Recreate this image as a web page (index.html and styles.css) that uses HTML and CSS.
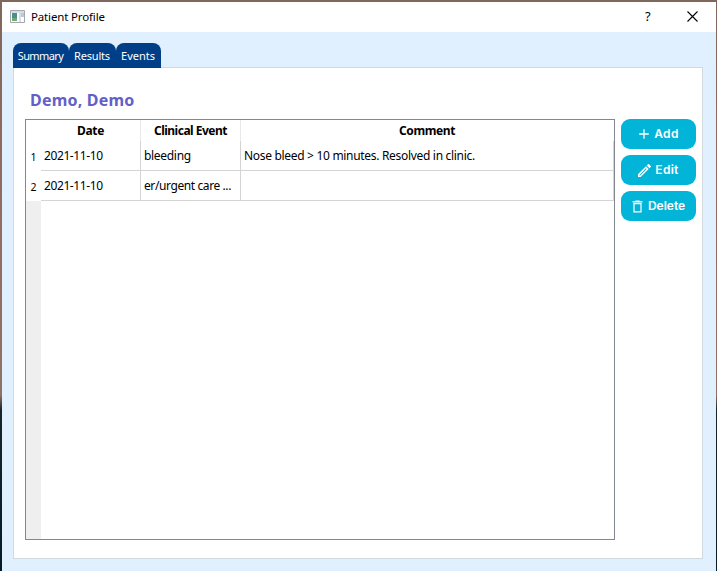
FILE: index.html
```
<!DOCTYPE html>
<html lang="en">
<head>
<meta charset="utf-8">
<title>Patient Profile</title>
<link rel="stylesheet" href="styles.css">
</head>
<body>
<div class="window">
  <header class="titlebar">
    <svg class="app-icon" width="15" height="13" viewBox="0 0 15 13"><path fill="#fff" stroke="#a3a7ae" d="M.5.5h14v12H.5z"/><path fill="#d6dce8" d="M1 1h13v2H1zM9 3h2v9H9z"/><path fill="#4b8f89" d="M2 3h5v8H2z"/><path fill="#74a873" d="M2 8h5v3H2z"/><path fill="#bcc8d5" d="M11 3h3v4h-3z"/></svg>
    <h1 class="title"><span>Patient Profile</span></h1>
    <span class="help">?</span>
    <svg class="close" width="11" height="11" viewBox="0 0 11 11"><path fill="none" stroke="#000" stroke-width="1.1" d="M.5.5l10 10M10.500.5l-10 10"/></svg>
  </header>
  <main class="content">
    <nav class="tabs">
      <a class="tab summary">Summary</a><a class="tab results">Results</a><a class="tab events">Events</a>
    </nav>
    <section class="panel">
      <h2 class="patient"><span>Demo, Demo</span></h2>
      <div class="body">
        <div class="grid">
          <div class="row head"><div class="num"></div><div class="cell"><span class="h-date">Date</span></div><div class="cell"><span class="h-event">Clinical Event</span></div><div class="cell"><span class="h-comment">Comment</span></div></div>
          <div class="row"><div class="num">1</div><div class="cell"><span class="date">2021-11-10</span></div><div class="cell"><span>bleeding</span></div><div class="cell"><span>Nose bleed &gt; 10 minutes. Resolved in clinic.</span></div></div>
          <div class="row"><div class="num">2</div><div class="cell"><span class="date">2021-11-10</span></div><div class="cell"><span class="urgent">er/urgent care ...</span></div><div class="cell"></div></div>
          <div class="gutter"></div>
        </div>
        <div class="actions">
          <button class="action"><svg class="icon" width="12" height="12" viewBox="0 0 12 12"><path fill="none" stroke="#fff" stroke-width="1.3" d="M6 1.200v9.600M1.200 6h9.600"/></svg><span class="add">Add</span></button>
          <button class="action"><svg class="icon" width="13" height="13" viewBox="3 3 18 18"><path fill="#fff" d="M14.060 9.020l.92.92L5.920 19H5v-.92l9.060-9.060M17.660 3c-.25 0-.51.1-.7.290l-1.830 1.830 3.750 3.750 1.830-1.830c.39-.39.39-1.020 0-1.410l-2.340-2.340c-.2-.2-.45-.29-.71-.29zm-3.600 3.190L3 17.250V21h3.750L17.810 9.940l-3.750-3.750z"/></svg><span class="edit">Edit</span></button>
          <button class="action"><svg class="icon" width="12" height="13" viewBox="0 0 12 13"><path fill="none" stroke="#fff" stroke-width="1.200" d="M.5 1.800h10M3.500 1.200h4M2 3.600h7v8.300H2z"/></svg><span class="delete">Delete</span></button>
        </div>
      </div>
    </section>
  </main>
</div>
</body>
</html>
```
FILE: styles.css
```
* { box-sizing: border-box; }
body {
  margin: 0;
  height: 571px;
  overflow: hidden;
  padding: 2px 1px 0 2px;
  background: linear-gradient(#80675c 0, #916b60 180px, #907268 395px, #17252b 410px, #061c25 571px);
  font: 12px "Noto Sans", "Open Sans", sans-serif;
  color: #000;
}
h1, h2 { margin: 0; font-weight: 400; }
span { white-space: nowrap; }
.window { height: 569px; background: #e0f0fe; }
.titlebar { height: 30px; background: #fff; display: flex; align-items: center; padding: 0 18px 0 8px; }
.app-icon { margin-bottom: 2px; }
.title { flex: 1; font-size: 11.5px; line-height: 16px; padding-left: 6px; letter-spacing: -.15px; }
.help { font-size: 13px; width: 8px; margin: 0 34px 2px 0; }
.close { margin-bottom: 2px; }
.content { padding: 11px 13px 0 11px; }
.tabs { display: flex; height: 25px; margin-bottom: -1px; position: relative; }
.tab { height: 25px; background: #003f87; color: #fff; border-radius: 8px 8px 0 0; font-size: 11px; line-height: 26px; text-align: center; white-space: nowrap; }
.summary { width: 56px; letter-spacing: -.6px; padding-right: 1px; }
.results { width: 47px; letter-spacing: -.2px; padding-right: 1px; }
.events { width: 45px; padding-right: 1px; }
.panel { height: 492px; background: #fff; border: 1px solid #d2d9de; padding: 22px 6px 0 11px; }
.patient { height: 29px; padding-left: 5px; color: #6260c6; font-size: 16px; font-weight: 700; line-height: 21px; letter-spacing: .2px; }
.body { display: flex; gap: 6px; }
.grid { width: 590px; height: 421px; border: 1px solid #828790; display: flex; flex-direction: column; }
.row { display: grid; grid-template-columns: 15px 100px 100px 373px; grid-template-rows: 100%; height: 30px; flex: none; }
.cell { border-right: 1px solid #d4d4d4; border-bottom: 1px solid #d4d4d4; padding-left: 3px; line-height: 30px; letter-spacing: -.31px; }
.num { font-size: 10.500px; line-height: 32px; text-align: center; }
.date { letter-spacing: -.4px; }
.urgent { letter-spacing: -.4px; }
.head { height: 21px; }
.head .cell { text-align: center; font-weight: 700; line-height: 22px; padding: 0; border-bottom: 0; border-color: #e8e8e8; }
.head .cell:last-child { border-color: transparent; }
.h-event { letter-spacing: -.5px; }
.h-comment { letter-spacing: -.4px; }
.gutter { width: 15px; flex: 1; background: #efefef; }
.actions { display: flex; flex-direction: column; gap: 6px; }
.action { width: 75px; height: 30px; border: 0; border-radius: 9px; background: #03b4d9; color: #fff; font: 600 12px/28px Inter, sans-serif; padding: 0; display: flex; align-items: center; justify-content: center; gap: 4px; }
.add { letter-spacing: .4px; }
.edit { letter-spacing: .3px; }
```
